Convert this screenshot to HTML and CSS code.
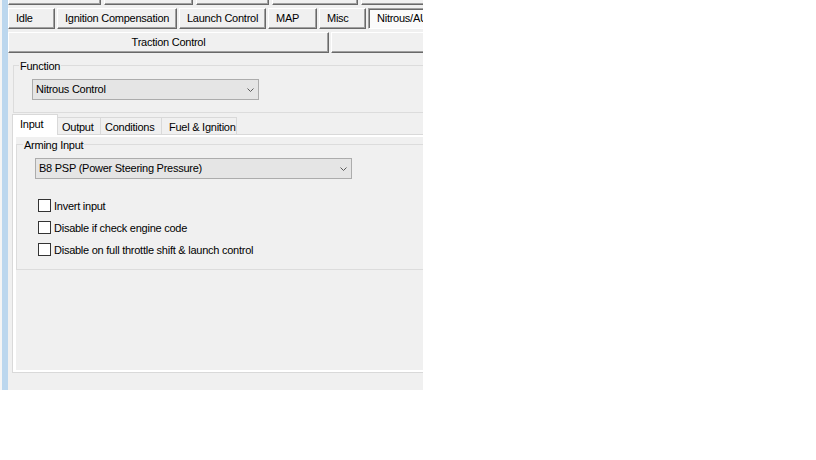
FILE: index.html
```html
<!DOCTYPE html>
<html>
<head>
<meta charset="utf-8">
<title>Nitrous Control</title>
<link rel="stylesheet" href="styles.css">
</head>
<body>
<div class="app">
  <div class="edge"></div>
  <div class="rail"></div>
  <div class="main">
    <div class="brows">
      <div class="brow brow-1">
        <div class="btn w-r1a"></div>
        <div class="btn w-r1b"></div>
        <div class="btn w-r1c"></div>
        <div class="btn w-r1d"></div>
        <div class="btn w-wide"></div>
      </div>
      <div class="brow brow-2">
        <div class="btn w-idle">Idle</div>
        <div class="btn w-ign">Ignition Compensation</div>
        <div class="btn w-launch">Launch Control</div>
        <div class="btn w-map">MAP</div>
        <div class="btn w-misc">Misc</div>
        <div class="btn btn-on w-nitrous">Nitrous/AUX</div>
      </div>
      <div class="brow brow-3">
        <div class="btn btn-center w-traction">Traction Control</div>
        <div class="btn w-wide"></div>
      </div>
    </div>

    <div class="group group-func">
      <span class="group-title">Function</span>
      <div class="combo combo-func">
        <span class="combo-text">Nitrous Control</span>
        <svg class="chev" width="7" height="4" viewBox="0 0 7 4"><path d="M0.5 0.5 L3.5 3.5 L6.5 0.5" fill="none" stroke="#5a5a5a" stroke-width="1"/></svg>
      </div>
    </div>

    <div class="tabctl">
      <div class="tabhead">
        <div class="tab tab-input active">Input</div>
        <div class="tab tab-output">Output</div>
        <div class="tab tab-cond">Conditions</div>
        <div class="tab tab-fuel">Fuel &amp; Ignition</div>
      </div>
      <div class="tabpage">
        <div class="pageinner">
          <div class="group group-arm">
            <span class="group-title">Arming Input</span>
            <div class="combo combo-arm">
              <span class="combo-text">B8 PSP (Power Steering Pressure)</span>
              <svg class="chev" width="7" height="4" viewBox="0 0 7 4"><path d="M0.5 0.5 L3.5 3.5 L6.5 0.5" fill="none" stroke="#5a5a5a" stroke-width="1"/></svg>
            </div>
            <div class="checks">
              <div class="checkrow"><span class="check"></span><span class="checklabel">Invert input</span></div>
              <div class="checkrow"><span class="check"></span><span class="checklabel">Disable if check engine code</span></div>
              <div class="checkrow"><span class="check"></span><span class="checklabel">Disable on full throttle shift &amp; launch control</span></div>
            </div>
          </div>
        </div>
      </div>
    </div>
  </div>
</div>
</body>
</html>
```

FILE: styles.css
```css
body {
  margin: 0;
  background: #ffffff;
  font-family: "Liberation Sans", Arial, sans-serif;
  font-size: 11px;
  line-height: 13px;
  letter-spacing: -0.25px;
  color: #000000;
}

.app {
  display: flex;
  width: 423px;
  height: 390px;
  background: #f0f0f0;
  overflow: hidden;
}

.edge {
  flex: none;
  width: 2px;
  background: #f5f5f5;
}

.rail {
  flex: none;
  width: 6px;
  background: #bcd7ee;
}

.main {
  flex: 1;
  min-width: 0;
  display: flex;
  flex-direction: column;
  overflow: hidden;
}

/* top button tab rows */
.brows {
  flex: none;
  display: flex;
  flex-direction: column;
  gap: 3px;
  margin-top: -16px;
}

.brow {
  display: flex;
  height: 21px;
  gap: 3px;
}

.brow-2,
.brow-3 {
  gap: 2px;
}

.btn {
  flex: none;
  box-sizing: border-box;
  height: 21px;
  border: 1px solid;
  border-color: #ffffff #696969 #696969 #ffffff;
  box-shadow: inset -1px -1px 0 #a0a0a0;
  background: #f0f0f0;
  display: flex;
  align-items: center;
  justify-content: flex-start;
  padding-left: 7px;
  white-space: nowrap;
}

.btn-center {
  justify-content: center;
  padding-left: 0;
}

.btn-on {
  background: #fbfbfb;
  border-color: #a0a0a0 #ffffff #ffffff #a0a0a0;
  box-shadow: inset 1px 1px 0 #696969;
  padding-left: 8px;
}

.w-r1a { width: 93px; }
.w-r1b { width: 89px; }
.w-r1c { width: 73px; }
.w-r1d { width: 86px; }
.w-wide { width: 140px; }
.w-idle { width: 47px; }
.w-ign { width: 120px; }
.w-launch { width: 87px; }
.w-map { width: 49px; }
.w-misc { width: 47px; }
.w-nitrous { width: 76px; }
.w-traction { width: 321px; }

/* group boxes */
.group {
  position: relative;
  border: 1px solid #dcdcdc;
  border-right: none;
  padding: 13px 0 0 18px;
}

.group-title {
  position: absolute;
  top: -6px;
  left: 5px;
  padding: 0 1px;
  background: #f0f0f0;
  white-space: nowrap;
}

.group-func {
  flex: none;
  margin: 12px 0 0 5px;
  padding-bottom: 12px;
}

.group-arm {
  margin-top: 7px;
  padding-bottom: 4px;
}

.group-arm .group-title {
  left: 6px;
}

/* combo boxes */
.combo {
  display: flex;
  align-items: center;
  box-sizing: border-box;
  height: 21px;
  border: 1px solid #acacac;
  background: #e5e5e5;
  padding: 0 4px 0 3px;
  white-space: nowrap;
}

.combo-func { width: 227px; }
.combo-arm { width: 317px; }

.combo-text {
  flex: 1;
}

.chev {
  flex: none;
  display: block;
}

/* inner tab control */
.tabctl {
  flex: 1;
  display: flex;
  flex-direction: column;
  margin: 1px 0 17px 4px;
}

.tabhead {
  flex: none;
  display: flex;
  align-items: flex-end;
  height: 20px;
}

.tab {
  flex: none;
  box-sizing: border-box;
  height: 17px;
  border: 1px solid #d9d9d9;
  border-bottom: none;
  margin-left: -1px;
  padding-top: 3px;
  background: #f0f0f0;
  white-space: nowrap;
}

.tab.active {
  position: relative;
  z-index: 1;
  height: 21px;
  margin-left: 0;
  margin-bottom: -1px;
  background: #ffffff;
}

.tab-input { width: 46px; padding-left: 7px; }
.tab-output { width: 44px; padding-left: 4px; }
.tab-cond { width: 62px; padding-left: 4px; }
.tab-fuel { width: 76px; padding-left: 7px; }

.tabpage {
  flex: 1;
  display: flex;
  border: 1px solid #d9d9d9;
  border-right: none;
  background: #ffffff;
  padding: 2px 0 2px 3px;
}

.pageinner {
  flex: 1;
  background: #f0f0f0;
  overflow: hidden;
}

/* check boxes */
.checks {
  margin-top: 20px;
  margin-left: 3px;
}

.checkrow {
  display: flex;
  height: 22px;
  gap: 3px;
}

.check {
  flex: none;
  box-sizing: border-box;
  width: 13px;
  height: 13px;
  border: 1px solid #333333;
  background: #ffffff;
}

.checklabel {
  padding-top: 1px;
  white-space: nowrap;
}
```
